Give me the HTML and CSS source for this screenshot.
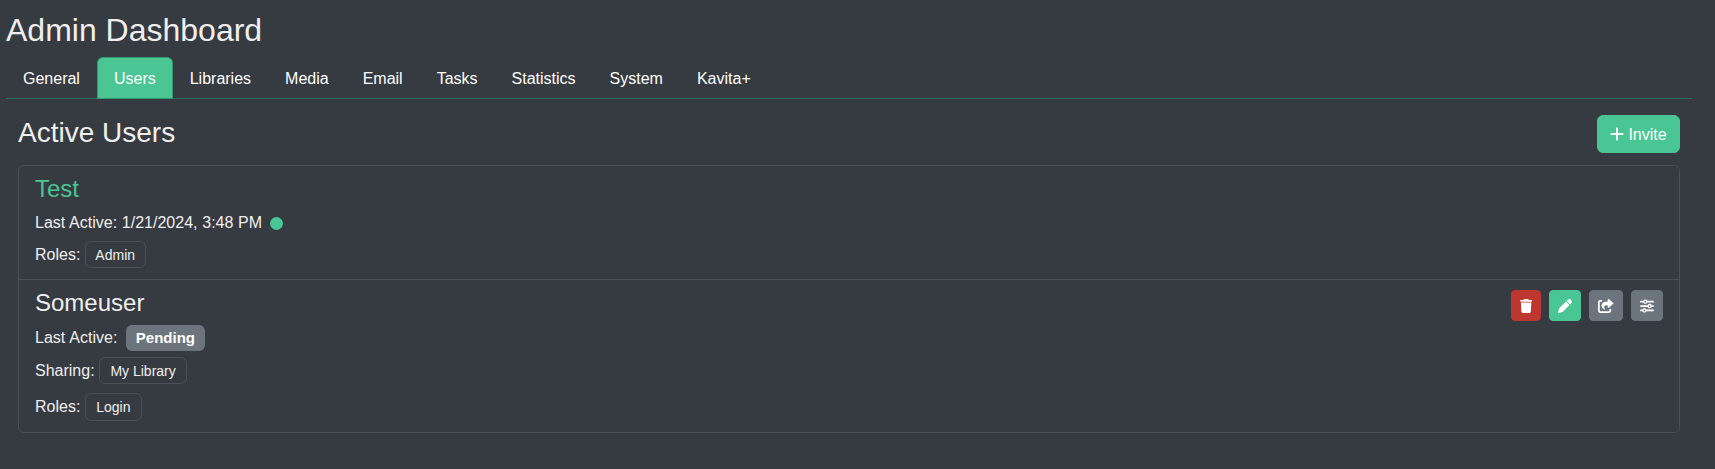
FILE: index.html
```html
<!DOCTYPE html>
<html lang="en">
<head>
<meta charset="utf-8">
<title>Admin Dashboard</title>
<link rel="stylesheet" href="styles.css">
</head>
<body>
<main class="page">
  <h2 class="page-title">Admin Dashboard</h2>
  <nav class="tabs">
    <a class="tab">General</a>
    <a class="tab active">Users</a>
    <a class="tab">Libraries</a>
    <a class="tab">Media</a>
    <a class="tab">Email</a>
    <a class="tab">Tasks</a>
    <a class="tab">Statistics</a>
    <a class="tab">System</a>
    <a class="tab">Kavita+</a>
  </nav>
  <section class="content">
    <header class="section-head">
      <h3 class="section-title">Active Users</h3>
      <button class="btn invite"><svg class="plus" viewBox="0 0 448 512"><path d="M256 80c0-17.700-14.300-32-32-32s-32 14.300-32 32V224H48c-17.700 0-32 14.300-32 32s14.300 32 32 32H192V432c0 17.700 14.300 32 32 32s32-14.300 32-32V288H400c17.700 0 32-14.300 32-32s-14.300-32-32-32H256V80z"/></svg>Invite</button>
    </header>
    <ul class="users">
      <li class="user">
        <h4 class="name self">Test</h4>
        <div class="row activity">Last Active: 1/21/2024, 3:48 PM<span class="online"></span></div>
        <div class="row roles">Roles: <span class="tag">Admin</span></div>
      </li>
      <li class="user">
        <div class="user-head">
          <h4 class="name">Someuser</h4>
          <div class="actions">
            <button class="btn small danger"><svg class="trash" viewBox="0 0 448 512"><path d="M135.200 17.700L128 32H32C14.300 32 0 46.300 0 64S14.300 96 32 96H416c17.700 0 32-14.300 32-32s-14.300-32-32-32H320l-7.200-14.300C307.400 6.800 296.300 0 284.200 0H163.800c-12.100 0-23.200 6.800-28.600 17.700zM416 128H32L53.200 467c1.600 25.300 22.600 45 47.900 45H346.900c25.300 0 46.300-19.700 47.900-45L416 128z"/></svg></button>
            <button class="btn small"><svg class="pen" viewBox="0 0 512 512"><path d="M362.700 19.300L314.300 67.700 444.300 197.700l48.400-48.400c25-25 25-65.500 0-90.500L453.300 19.300c-25-25-65.500-25-90.500 0zm-71 71L58.600 323.500c-10.400 10.400-18 23.300-22.200 37.400L1 481.200C-1.500 489.700 .8 498.800 7 505s15.300 8.500 23.700 6.100l120.300-35.400c14.100-4.200 27-11.800 37.400-22.200L421.700 220.300 291.700 90.300z"/></svg></button>
            <button class="btn small secondary"><svg class="share" viewBox="0 0 576 512"><path d="M352 224H305.500c-45 0-81.500 36.500-81.500 81.500c0 22.300 10.300 34.300 19.200 40.500c6.800 4.700 12.800 12 12.800 20.300c0 9.800-8 17.800-17.800 17.800h-2.500c-2.400 0-4.800-.4-7.100-1.400C210.800 374.800 128 333.400 128 240c0-79.500 64.500-144 144-144h80V34.700C352 15.500 367.500 0 386.700 0c8.600 0 16.800 3.200 23.200 8.900L548.100 133.300c7.600 6.800 11.900 16.500 11.900 26.700s-4.300 19.900-11.900 26.700l-139 125.100c-5.900 5.300-13.500 8.200-21.400 8.200H384c-17.700 0-32-14.300-32-32V224zM80 96c-8.800 0-16 7.200-16 16V432c0 8.800 7.200 16 16 16H400c8.800 0 16-7.200 16-16V384c0-17.700 14.300-32 32-32s32 14.300 32 32v48c0 44.200-35.800 80-80 80H80c-44.200 0-80-35.800-80-80V112C0 67.800 35.800 32 80 32h48c17.700 0 32 14.300 32 32s-14.300 32-32 32H80z"/></svg></button>
            <button class="btn small secondary"><svg class="sliders" viewBox="0 0 512 512"><path d="M0 416c0 17.700 14.300 32 32 32l54.700 0c12.300 28.300 40.500 48 73.300 48s61-19.700 73.300-48L480 448c17.700 0 32-14.300 32-32s-14.300-32-32-32l-246.700 0c-12.300-28.300-40.500-48-73.300-48s-61 19.700-73.300 48L32 384c-17.700 0-32 14.300-32 32zm128 0a32 32 0 1 1 64 0 32 32 0 1 1 -64 0zM320 256a32 32 0 1 1 64 0 32 32 0 1 1 -64 0zm32-80c-32.800 0-61 19.700-73.300 48L32 224c-17.700 0-32 14.300-32 32s14.300 32 32 32l246.700 0c12.300 28.300 40.500 48 73.300 48s61-19.700 73.300-48l54.700 0c17.700 0 32-14.300 32-32s-14.300-32-32-32l-54.700 0c-12.300-28.300-40.500-48-73.300-48zM192 128a32 32 0 1 1 0-64 32 32 0 1 1 0 64zm73.300-64C253 35.700 224.800 16 192 16s-61 19.700-73.300 48L32 64C14.300 64 0 78.300 0 96s14.300 32 32 32l86.700 0c12.300 28.300 40.500 48 73.300 48s61-19.700 73.300-48L480 128c17.700 0 32-14.300 32-32s-14.300-32-32-32L265.300 64z"/></svg></button>
          </div>
        </div>
        <div class="row pending-row">Last Active: <span class="badge">Pending</span></div>
        <div class="row sharing">Sharing: <span class="tag wide">My Library</span></div>
        <div class="row roles last">Roles: <span class="tag wide tall">Login</span></div>
      </li>
    </ul>
  </section>
</main>
</body>
</html>
```
FILE: styles.css
```css
* { box-sizing: border-box; }
body {
  margin: 0;
  background: #363a41;
  color: #efefef;
  font: 16px/24px "Liberation Sans", Arial, sans-serif;
}
h2, h3, h4 { margin: 0; font-weight: 400; }
.page { padding: 11px 23px 0 6px; }
.page-title { font-size: 32px; line-height: 38px; margin-bottom: 8px; }
.tabs { display: flex; height: 42px; border-bottom: 1px solid #2e6b54; }
.tab {
  height: 42px;
  padding: 9px 16px 7px;
  border: 1px solid transparent;
  border-radius: 6px 6px 0 0;
  color: #fff;
}
.tab.active { background: #4ac694; border-color: #36996f; }
.content { padding: 16px 12px 0; }
.section-head { display: flex; justify-content: space-between; height: 38px; }
.section-title { font-size: 28px; line-height: 36px; }
.btn {
  display: flex;
  align-items: center;
  justify-content: center;
  margin: 0;
  border: 1px solid #4ac694;
  border-radius: 6px;
  background: #4ac694;
  color: #fff;
  font: inherit;
}
.btn svg { fill: currentColor; }
.invite { width: 83px; height: 38px; padding: 1px 0 0; gap: 4px; }
.plus { width: 14px; height: 16px; margin-top: -1px; }
.users {
  list-style: none;
  margin: 12px 0 0;
  padding: 0;
  border: 1px solid #4d5156;
  border-radius: 6px;
}
.user { padding: 8px 16px; height: 113px; }
.user + .user { height: 153px; border-top: 1px solid #4d5156; }
.name { font-size: 24px; line-height: 29px; }
.self { color: #4ac694; }
.user-head { display: flex; justify-content: space-between; }
.actions { display: flex; gap: 8px; padding-top: 2px; height: 29px; }
.small { height: 31px; padding: 0 8px; border-radius: 4px; flex: none; }
.small svg { height: 14px; }
.trash { width: 12.250px; }
.pen, .sliders { width: 14px; }
.share { width: 15.750px; }
.danger { background: #bd362f; border-color: #bd362f; }
.secondary { background: #6c757d; border-color: #6c757d; }
.row { display: flex; align-items: center; height: 27px; }
.activity { margin-top: 6px; word-spacing: 0.3px; }
.online { width: 13px; height: 13px; margin: 2px 0 0 8px; border-radius: 50%; background: #4ac694; }
.row.roles { margin-top: 5px; }
.tag {
  height: 27px;
  margin-left: 4.500px;
  padding: 0 9.500px;
  border: 1px solid #4d5156;
  border-radius: 6px;
  font-size: 14px;
  line-height: 27px;
}
.wide { padding: 0 10.300px; }
.tall { height: 28px; }
.badge {
  height: 26px;
  margin-left: 8.500px;
  padding: 0 10px;
  border-radius: 6px;
  background: #6c757d;
  color: #fff;
  font-size: 15px;
  font-weight: 700;
  line-height: 26px;
}
.pending-row { margin-top: 7px; word-spacing: 0.500px; }
.sharing { margin-top: 6px; }
.row.last { margin-top: 9px; }
```
